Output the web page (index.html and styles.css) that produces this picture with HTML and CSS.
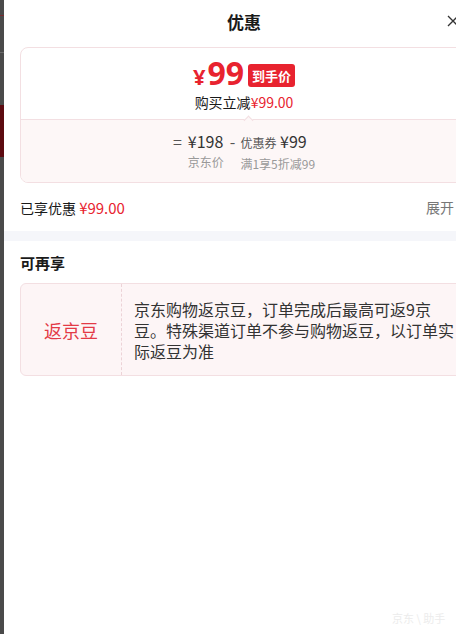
FILE: index.html
```html
<!DOCTYPE html>
<html lang="zh-CN">
<head>
  <meta charset="UTF-8">
  <title>优惠</title>
  <meta name="viewport" content="width=device-width, initial-scale=1.0">
  <link rel="stylesheet" href="styles.css">
</head>
<body>
  <!-- 背后页面的遮罩 -->
  <div class="backdrop">
    <div class="bd-line bd-line1"></div>
    <div class="bd-line bd-line2"></div>
    <div class="bd-red"></div>
  </div>

  <div class="panel">
    <div class="panel-head">
      <span class="panel-title">优惠</span>
      <span class="panel-close">
        <svg width="12" height="12" viewBox="0 0 12 12"><path d="M1 1L11 11M11 1L1 11" stroke="#333" stroke-width="1.3" fill="none"/></svg>
      </span>
    </div>

    <div class="price-card">
      <div class="price-top">
        <div class="final-row">
          <span class="final-price"><span class="yen">¥</span>99</span>
          <span class="final-tag">到手价</span>
        </div>
        <div class="cut-row">购买立减<span class="red">¥99.00</span></div>
      </div>
      <div class="price-bottom">
        <span class="op">=</span>
        <div class="calc-col">
          <div class="calc-val">¥198</div>
          <div class="calc-note">京东价</div>
        </div>
        <span class="op op-minus">-</span>
        <div class="calc-col">
          <div class="calc-val"><span class="calc-small">优惠券</span> ¥99</div>
          <div class="calc-note">满1享5折减99</div>
        </div>
      </div>
    </div>

    <div class="enjoyed-row">
      <span>已享优惠 <span class="red enjoyed-num">¥99.00</span></span>
      <span class="expand">展开</span>
    </div>

    <div class="gap-band"></div>

    <div class="more-title">可再享</div>
    <div class="bean-box">
      <div class="bean-name">返京豆</div>
      <div class="bean-desc">京东购物返京豆，订单完成后最高可返9京豆。特殊渠道订单不参与购物返豆，以订单实际返豆为准</div>
    </div>

    <div class="watermark">京东 \ 助手</div>
  </div>
</body>
</html>
```

FILE: styles.css
```css
:root {
  --red: #e8232f;
  --text: #1a1a1a;
  --gray: #999999;
  --pink-line: #f3dfe2;
}

html, body {
  margin: 0;
  height: 100%;
}

body {
  display: flex;
  overflow: hidden;
  background: #ffffff;
  font-family: "Noto Sans CJK SC", "Noto Sans", sans-serif;
  color: var(--text);
}

.backdrop {
  width: 4px;
  flex-shrink: 0;
  background: #4a4a4a;
  position: relative;
}

.bd-line {
  position: absolute;
  left: 0;
  width: 4px;
  height: 1px;
  background: #7a2a2e;
}
.bd-line1 { top: 15px; }
.bd-line2 { top: 52px; background: #6a6a6a; }

.bd-red {
  position: absolute;
  left: 0;
  top: 105px;
  width: 4px;
  height: 52px;
  background: #5c0a10;
}

.panel {
  width: 480px;
  flex-shrink: 0;
  position: relative;
  background: #ffffff;
}

.panel-head {
  height: 42px;
  display: flex;
  align-items: center;
  justify-content: center;
  position: relative;
}

.panel-title {
  font-size: 17px;
  font-weight: 700;
  color: #1a1a1a;
}

.panel-close {
  position: absolute;
  left: 443px;
  top: 15px;
  line-height: 0;
}

/* 价格卡片 */
.price-card {
  margin: 5px 16px 0 16px;
  border: 1px solid var(--pink-line);
  border-radius: 8px;
  overflow: hidden;
}

.price-top {
  height: 71px;
  padding-top: 9px;
  box-sizing: border-box;
  text-align: center;
  position: relative;
}

.price-top::after {
  content: "";
  position: absolute;
  left: 50%;
  bottom: -1px;
  margin-left: 1px;
  width: 6px;
  height: 6px;
  background: #fdf7f7;
  border-left: 1px solid var(--pink-line);
  border-top: 1px solid var(--pink-line);
  transform: translateY(4px) rotate(45deg);
  z-index: 1;
}

.final-row {
  display: flex;
  justify-content: center;
  align-items: center;
  height: 34px;
}

.final-price {
  color: var(--red);
  font-family: "Noto Sans", sans-serif;
  font-size: 32px;
  font-weight: 700;
  line-height: 34px;
}

.yen {
  font-size: 22px;
  margin-right: 2px;
}

.final-tag {
  margin-left: 4px;
  background: var(--red);
  color: #ffffff;
  font-size: 13px;
  font-weight: 700;
  line-height: 23px;
  padding: 0 4px;
  border-radius: 3px;
  margin-top: 2px;
}

.cut-row {
  font-size: 14px;
  line-height: 20px;
  margin-top: 1px;
  color: #1a1a1a;
}

.red {
  color: var(--red);
}

.price-bottom {
  background: #fdf7f7;
  border-top: 1px solid var(--pink-line);
  height: 63px;
  box-sizing: border-box;
  padding-top: 10px;
  display: flex;
  justify-content: center;
  align-items: flex-start;
}

.op {
  font-size: 16px;
  line-height: 22px;
  color: #555555;
  margin-right: 6px;
}

.op-minus {
  margin: 0 5px 0 6px;
}

.calc-val {
  font-size: 16px;
  line-height: 22px;
  color: #333333;
}

.calc-small {
  font-size: 12px;
  color: #555555;
}

.calc-note {
  font-size: 12px;
  line-height: 20px;
  color: var(--gray);
}

.enjoyed-row {
  display: flex;
  justify-content: space-between;
  align-items: center;
  height: 48px;
  padding: 0 30px 0 16px;
  font-size: 14px;
}

.enjoyed-num {
  font-size: 15px;
}

.expand {
  color: #777777;
}

.gap-band {
  height: 10px;
  background: #f5f6fa;
}

.more-title {
  padding: 12px 16px 0 16px;
  font-size: 15px;
  font-weight: 700;
  line-height: 20px;
}

.bean-box {
  margin: 10px 16px 0 16px;
  display: flex;
  min-height: 91px;
  background: #fdf5f6;
  border: 1px solid var(--pink-line);
  border-radius: 6px;
}

.bean-name {
  width: 100px;
  flex-shrink: 0;
  display: flex;
  align-items: center;
  justify-content: center;
  font-size: 18px;
  color: #e33a46;
  border-right: 1px dashed #ecd3d7;
}

.bean-desc {
  padding: 15px 10px 11px 12px;
  font-size: 16px;
  line-height: 21px;
  color: #333333;
}

.watermark {
  position: absolute;
  left: 388px;
  top: 610px;
  font-size: 11px;
  color: #ececec;
}
```
